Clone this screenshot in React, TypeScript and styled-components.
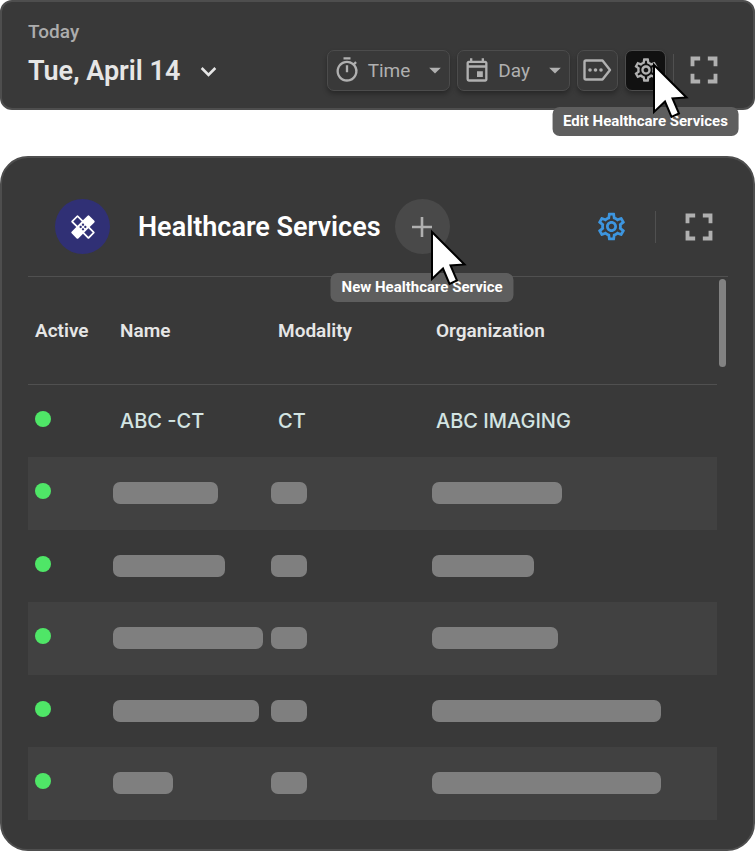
import React from 'react';
import styled, { createGlobalStyle, css } from 'styled-components';
import {
  MdArrowDropDown,
  MdFullscreen,
  MdKeyboardArrowDown,
  MdOutlineEvent,
  MdOutlineHealing,
  MdOutlineSettings,
  MdOutlineTimer,
} from 'react-icons/md';

const GlobalStyle = createGlobalStyle`
  * { box-sizing: border-box; }
  body { margin: 0; background: #fff; font-family: Roboto, "Liberation Sans", sans-serif; }
  button { font: inherit; color: inherit; padding: 0; cursor: pointer; }
  svg { display: block; flex: none; }
`;

const Page = styled.main`
  display: flex;
  flex-direction: column;
  gap: 46px;
`;

const panel = css`
  background: #393939;
  border: 2px solid #4e4e4e;
`;

const TopBar = styled.header`
  ${panel}
  border-radius: 12px;
  display: flex;
  justify-content: space-between;
  align-items: flex-end;
  padding: 18px 26px 10px 26px;
`;

const DateBlock = styled.div`
  display: flex;
  flex-direction: column;
`;

const Caption = styled.span`
  font-size: 19px;
  line-height: 24px;
  font-weight: 500;
  color: #adadad;
`;

const DateButton = styled.button`
  display: flex;
  align-items: center;
  gap: 13px;
  height: 54px;
  border: 0;
  background: none;
  color: #e6e6e6;
  font-size: 27px;
  font-weight: 600;
`;

const Tools = styled.div`
  display: flex;
  align-items: center;
  gap: 7px;
  margin-bottom: 5px;
`;

const ToolButton = styled.button<{ $active?: boolean }>`
  display: flex;
  align-items: center;
  justify-content: center;
  min-width: 41px;
  height: 41px;
  border: 1px solid #4c4c4c;
  border-radius: 7px;
  background: ${(p) => (p.$active ? '#111' : '#393939')};
  color: #b0b0b0;
  font-size: 19px;
  box-shadow: 0 3px 5px rgba(0, 0, 0, 0.3);
`;

const PickerButton = styled(ToolButton)`
  padding: 0 0 0 5px;
`;

const PickerLabel = styled.span`
  padding: 0 11px 0 7px;
`;

const Anchor = styled.div`
  position: relative;
  display: flex;
`;

const Tooltip = styled.span<{ $top: number }>`
  position: absolute;
  top: ${(p) => p.$top}px;
  left: 50%;
  transform: translateX(-50%);
  z-index: 1;
  padding: 0 11px;
  border-radius: 7px;
  background: #5e5e5e;
  color: #fff;
  font-size: 15px;
  line-height: 29px;
  font-weight: 700;
  white-space: nowrap;
`;

const Pointer = styled.svg<{ $top: number }>`
  position: absolute;
  left: 65%;
  top: ${(p) => p.$top}px;
  z-index: 2;
  pointer-events: none;
`;

const Divider = styled.span`
  width: 1px;
  height: 32px;
  background: #505050;
`;

const IconButton = styled.button<{ $blue?: boolean }>`
  display: flex;
  border: 0;
  background: none;
  color: ${(p) => (p.$blue ? '#3d96e0' : '#b0b0b0')};
`;

const Card = styled.section`
  ${panel}
  border-radius: 28px;
  padding: 41px 25px 29px 26px;
`;

const CardHeader = styled.div`
  display: flex;
  align-items: center;
  padding: 0 6px 22px 27px;
  border-bottom: 1px solid #505050;
`;

const Badge = styled.span`
  display: flex;
  align-items: center;
  justify-content: center;
  width: 55px;
  height: 55px;
  border-radius: 50%;
  background: #303075;
  color: #fff;
`;

const Title = styled.h1`
  margin: 0 14px 0 28px;
  font-size: 27px;
  line-height: 32px;
  font-weight: 600;
  color: #fff;
`;

const AddButton = styled.button`
  display: flex;
  align-items: center;
  justify-content: center;
  width: 55px;
  height: 55px;
  border: 0;
  border-radius: 50%;
  background: #494949;
  color: #b0b0b0;
`;

const CardTools = styled.div`
  display: flex;
  align-items: center;
  margin-left: auto;

  ${Divider} {
    margin: 0 20px 0 27px;
  }
`;

const ScrollArea = styled.div`
  display: flex;
  align-items: flex-start;
  gap: 2px;
  padding-right: 2px;
`;

const ScrollThumb = styled.div`
  flex: none;
  width: 7px;
  height: 88px;
  margin-top: 2px;
  border-radius: 4px;
  background: #828282;
`;

const Table = styled.table`
  flex: 1;
  min-width: 0;
  table-layout: fixed;
  border-collapse: separate;
  border-spacing: 0;
`;

const Column = styled.col<{ $width?: number }>`
  width: ${(p) => (p.$width ? `${p.$width}px` : 'auto')};
`;

const HeadCell = styled.th<{ $pad: number }>`
  height: 108px;
  padding: 0 0 0 ${(p) => p.$pad}px;
  border-bottom: 1px solid #505050;
  text-align: left;
  font-size: 19px;
  font-weight: 600;
  color: #e6e6e6;
`;

const Row = styled.tr`
  height: 72px;
  &:nth-child(even) {
    height: 73px;
    background: #414141;
  }
`;

const Cell = styled.td<{ $pad?: number }>`
  padding: 0 0 0 ${(p) => p.$pad ?? 0}px;
  font-family: Inter, Roboto, sans-serif;
  font-size: 20px;
  font-weight: 500;
  color: #d3e4e2;
`;

const StatusDot = styled.span`
  display: block;
  width: 16px;
  height: 16px;
  margin-bottom: 5px;
  border-radius: 50%;
  background: #4fe667;
`;

const Bar = styled.span<{ $width: number }>`
  display: block;
  width: ${(p) => p.$width}px;
  height: 22px;
  margin-bottom: 1px;
  border-radius: 7px;
  background: #7f7f7f;
`;

const Cursor = ({ top }: { top: number }) => (
  <Pointer $top={top} width="38" height="58" viewBox="0 0 38 58" aria-hidden="true">
    <path
      d="M2 3 L2 50 L13 39.5 L19.5 55 L27 51.5 L20.5 36.5 L34.5 35.5 Z"
      fill="#fff"
      stroke="#000"
      strokeWidth="2"
    />
  </Pointer>
);

const TagIcon = () => (
  <svg width="29" height="22" viewBox="0 0 29 22" fill="none" aria-hidden="true">
    <path
      d="M3 1.5H19.5L27 11L19.5 20.5H3Q1.5 20.5 1.5 19V3Q1.5 1.5 3 1.5Z"
      stroke="currentColor"
      strokeWidth="2.4"
      strokeLinejoin="round"
    />
    <circle cx="7" cy="11" r="1.8" fill="currentColor" />
    <circle cx="12.5" cy="11" r="1.8" fill="currentColor" />
    <circle cx="18" cy="11" r="1.8" fill="currentColor" />
  </svg>
);

const PlusIcon = () => (
  <svg width="20" height="20" viewBox="0 0 20 20" aria-hidden="true">
    <path d="M10 0V20M0 10H20" stroke="currentColor" strokeWidth="2.6" />
  </svg>
);

const placeholders = [
  [105, 36, 130],
  [112, 36, 102],
  [150, 36, 126],
  [146, 36, 229],
  [60, 36, 229],
];

export default function App() {
  return (
    <Page>
      <GlobalStyle />
      <TopBar>
        <DateBlock>
          <Caption>Today</Caption>
          <DateButton>
            Tue, April 14
            <MdKeyboardArrowDown size={31} />
          </DateButton>
        </DateBlock>
        <Tools>
          <PickerButton>
            <MdOutlineTimer size={28} />
            <PickerLabel>Time</PickerLabel>
            <MdArrowDropDown size={28} />
          </PickerButton>
          <PickerButton>
            <MdOutlineEvent size={28} />
            <PickerLabel>Day</PickerLabel>
            <MdArrowDropDown size={28} />
          </PickerButton>
          <ToolButton aria-label="Tags">
            <TagIcon />
          </ToolButton>
          <Anchor>
            <ToolButton $active aria-label="Settings" aria-describedby="edit-tip">
              <MdOutlineSettings size={28} />
            </ToolButton>
            <Tooltip id="edit-tip" role="tooltip" $top={57}>
              Edit Healthcare Services
            </Tooltip>
            <Cursor top={12} />
          </Anchor>
          <Divider />
          <IconButton aria-label="Full screen">
            <MdFullscreen size={46} />
          </IconButton>
        </Tools>
      </TopBar>
      <Card>
        <CardHeader>
          <Badge>
            <MdOutlineHealing size={28} />
          </Badge>
          <Title>Healthcare Services</Title>
          <Anchor>
            <AddButton aria-label="Add" aria-describedby="new-tip">
              <PlusIcon />
            </AddButton>
            <Tooltip id="new-tip" role="tooltip" $top={74}>
              New Healthcare Service
            </Tooltip>
            <Cursor top={30} />
          </Anchor>
          <CardTools>
            <IconButton $blue aria-label="Settings">
              <MdOutlineSettings size={33} />
            </IconButton>
            <Divider />
            <IconButton aria-label="Full screen">
              <MdFullscreen size={46} />
            </IconButton>
          </CardTools>
        </CardHeader>
        <ScrollArea>
          <Table>
            <colgroup>
              <Column $width={85} />
              <Column $width={158} />
              <Column $width={161} />
              <Column />
            </colgroup>
            <thead>
              <tr>
                <HeadCell $pad={7}>Active</HeadCell>
                <HeadCell $pad={7}>Name</HeadCell>
                <HeadCell $pad={7}>Modality</HeadCell>
                <HeadCell $pad={4}>Organization</HeadCell>
              </tr>
            </thead>
            <tbody>
              <Row>
                <Cell $pad={7}><StatusDot /></Cell>
                <Cell $pad={7}>ABC -CT</Cell>
                <Cell $pad={7}>CT</Cell>
                <Cell $pad={4}>ABC IMAGING</Cell>
              </Row>
              {placeholders.map((widths, i) => (
                <Row key={i}>
                  <Cell $pad={7}><StatusDot /></Cell>
                  {widths.map((w, j) => (
                    <Cell key={j}><Bar $width={w} /></Cell>
                  ))}
                </Row>
              ))}
            </tbody>
          </Table>
          <ScrollThumb />
        </ScrollArea>
      </Card>
    </Page>
  );
}
